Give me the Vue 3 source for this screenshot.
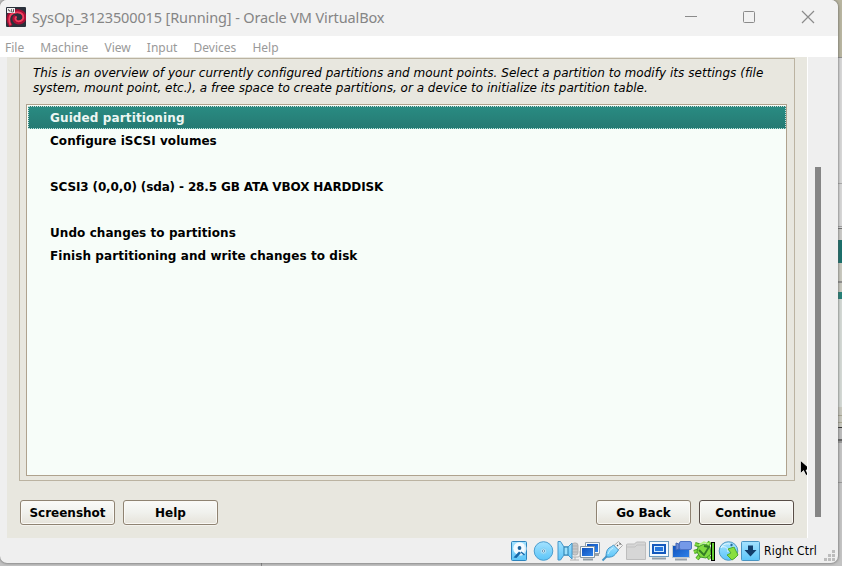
<script setup>
const menus = ['File', 'Machine', 'View', 'Input', 'Devices', 'Help']
const rows = [
  { text: 'Guided partitioning', kind: 'selected' },
  { text: 'Configure iSCSI volumes', kind: 'config' },
  { text: '', kind: 'blank' },
  { text: 'SCSI3 (0,0,0) (sda) - 28.5 GB ATA VBOX HARDDISK', kind: 'device' },
  { text: '', kind: 'blank' },
  { text: 'Undo changes to partitions', kind: 'action' },
  { text: 'Finish partitioning and write changes to disk', kind: 'action' },
]
</script>

<template>
  <div class="desktop">
    <svg class="behind" width="842" height="566" shape-rendering="crispEdges">
      <rect width="842" height="566" fill="#c3c3c3" />
      <rect x="826" width="16" height="57" fill="#b8b5a0" />
      <rect x="838" y="57" width="4" height="1" fill="#8f8f8f" />
      <rect x="838" y="58" width="4" height="170" fill="#d6d6d6" />
      <rect x="838" y="183" width="4" height="1" fill="#a9a9a9" />
      <rect x="838" y="226" width="4" height="1" fill="#a0a0a0" />
      <rect x="838" y="228" width="4" height="1" fill="#707070" />
      <rect x="838" y="229" width="4" height="11" fill="#c9c9c6" />
      <rect x="838" y="240" width="4" height="23" fill="#1b6f6b" />
      <rect x="838" y="263" width="4" height="18" fill="#c8c8be" />
      <rect x="838" y="281" width="4" height="2" fill="#8f8f8d" />
      <rect x="838" y="283" width="4" height="9" fill="#c8c8be" />
      <rect x="838" y="292" width="4" height="7" fill="#268078" />
      <rect x="838" y="299" width="4" height="108" fill="#d3d8d4" />
      <rect x="838" y="407" width="4" height="20" fill="#c8c8be" />
      <rect x="838" y="415" width="4" height="1" fill="#a7a592" />
      <rect x="838" y="422" width="4" height="1" fill="#a7a592" />
      <rect x="838" y="427" width="4" height="1" fill="#333" />
      <rect x="838" y="428" width="4" height="11" fill="#bcbcbc" />
      <rect x="838" y="439" width="4" height="2" fill="#666" />
      <rect x="838" y="441" width="4" height="2" fill="#999" />
      <rect x="838" y="482" width="4" height="1" fill="#999" />
      <rect x="261" y="563" width="1" height="3" fill="#888" />
    </svg>
    <div class="window">
      <header class="title">
        <svg class="logo" width="20" height="20" viewBox="0 0 20 20">
          <rect width="20" height="20" rx="1" fill="#2b313b" />
          <path d="M5 19C2 15 1.500 10 4 7c3.500-4 12-4 14 1 1.500 4-1 7.500-5 7.500-4.500 0-6-4-3.500-6.500" fill="none" stroke="#a80f35" stroke-width="3.800" />
          <path d="M4.500 18C2.500 14 3 9.500 5 7.500c3.500-3 10.500-3 12 .8 1.200 3.500-1 6-4.500 6-3 0-4-3-2-5" fill="none" stroke="#f2405f" stroke-width="1.800" />
          <rect x="1" y="1" width="8" height="5" fill="#f2f2f2" />
          <path d="M2.500 2v1.500h1.500V5M5.500 2v3h2V3M7.500 2v3" fill="none" stroke="#555" stroke-width=".8" />
        </svg>
        <h1>SysOp_3123500015 [Running] - Oracle VM VirtualBox</h1>
        <svg class="controls" width="136" height="16" viewBox="0 0 136 16" fill="none" stroke="#8b8b8b">
          <path d="M2 7.500h12" />
          <rect x="60.500" y="2.500" width="11" height="11" rx="1" />
          <path d="m119 2 12 12m0-12-12 12" stroke-width="1.200" />
        </svg>
      </header>
      <nav><span v-for="m in menus" :key="m">{{ m }}</span></nav>
      <div class="body">
        <main>
          <section class="panel">
            <p>This is an overview of your currently configured partitions and mount points. Select a partition to modify its settings (file<br><span>system, mount point, etc.), a free space to create partitions, or a device to initialize its partition table.</span></p>
            <ul>
              <li v-for="(r, i) in rows" :key="i" :class="r.kind">{{ r.text }}</li>
            </ul>
          </section>
          <div class="buttons">
            <button>Screenshot</button>
            <button>Help</button>
            <i></i>
            <button>Go Back</button>
            <button class="primary">Continue</button>
          </div>
        </main>
        <div class="scroll"></div>
      </div>
      <footer>
        <svg width="252" height="22" viewBox="0 0 252 22">
          <defs>
            <linearGradient id="sky" x2="0" y2="1"><stop stop-color="#a4e2ff" /><stop offset="1" stop-color="#5cc5f8" /></linearGradient>
            <linearGradient id="blue" x2="1" y2="1"><stop stop-color="#0f50ba" /><stop offset="1" stop-color="#2e83ea" /></linearGradient>
          </defs>
          <!-- hard disk -->
          <rect x="1.500" y="1.500" width="15" height="19" rx="1" fill="url(#sky)" stroke="#2d84bd" />
          <circle cx="9.500" cy="8.500" r="6.300" fill="#f4fbff" />
          <path d="M9.500 15a6.300 6.300 0 0 0 5-10" fill="none" stroke="#d2eefd" stroke-width="1.500" />
          <circle cx="9.500" cy="8" r="1.900" fill="#1d639c" />
          <path d="M3.500 17.500 9 11.500l2 1.500-4.500 5Z" fill="#1768a8" /><path d="m11 12 3.500 3" stroke="#1768a8" stroke-width="1.500" />
          <!-- optical disc -->
          <circle cx="33.500" cy="11" r="9.300" fill="url(#sky)" stroke="#4b9ed0" />
          <circle cx="33.500" cy="11" r="3" fill="#b8e8fd" stroke="#83d0f4" /><circle cx="33.500" cy="11" r="1.200" fill="#fff" stroke="#38749f" stroke-width=".7" />
          <!-- audio -->
          <g fill="#c8c8c8" stroke="#b1b1b1"><rect x="62" y="3" width="6" height="12" rx="2.500" /><path d="M59 12v3q0 2 3 2h6q2 0 2-2v-4M65 17v3M60 20h9M62 6h6M62 9h6M62 12h6" fill="none" /></g>
          <path d="M48 1.500h2.500L54 7h4l4-4v16l-4-4h-4l-3.500 5H48Z" fill="url(#sky)" stroke="#4595c8" /><path d="M54 7v8h4V7Z" fill="#9de0fb" stroke="#287cad" />
          <!-- network -->
          <g><path d="M75.500 2.500h14v11h-14Z" fill="#f4f9fc" stroke="#92a0ab" /><rect x="77" y="4" width="11" height="8" fill="url(#blue)" /><path d="M79 15h10" stroke="#99a3aa" stroke-width="2" /><path d="M70.500 6.500h14v11h-14Z" fill="#f4f9fc" stroke="#8797a2" /><rect x="72" y="8" width="11" height="8" fill="url(#blue)" /><path d="M73 19.500h10" stroke="#929ca3" stroke-width="2" /></g>
          <!-- usb -->
          <path d="m103.500 6 5-4.500 4 4-5 5Z" fill="#f3f3f3" stroke="#aaa" /><path d="m107 5 1 1m1.500-2.500 1 1" stroke="#555" stroke-width="1.300" />
          <path d="M96 17q0-7 3-9 3-1.500 4.500-3l5 5-3 4q-3 4-9.500 3Z" fill="url(#sky)" stroke="#4595c6" /><path d="m97 16-4.500 4.500" stroke="#4595c6" stroke-width="2" /><path d="M98 14q1-4 5-6" fill="none" stroke="#c8f1ff" />
          <!-- shared folder -->
          <path d="M116.500 19.500V5q0-1 1-1h7l2-2h8q1 0 1 1v16.500Z" fill="#d6d6d6" stroke="#bdbdbd" /><path d="M117 7h8l2-2h8" fill="none" stroke="#c2c2c2" />
          <!-- display -->
          <rect x="139.500" y="1.500" width="19" height="15" fill="#f3f9fd" stroke="#6c9abd" /><rect x="142" y="4" width="14" height="10" fill="#1459bd" /><rect x="144.500" y="6.500" width="9" height="5" fill="#2475dc" stroke="#d1eaff" /><path d="M142 18.500h14" stroke="#929fa8" stroke-width="2" />
          <!-- recording -->
          <rect x="162.500" y="5.500" width="17" height="12" fill="url(#blue)" stroke="#c0cbd2" /><path d="M165 19.500h12" stroke="#98a1a7" stroke-width="2" /><path d="m166 3 3 1v5l-3 1Z" fill="#6c8bd4" stroke="#4267b5" /><rect x="169.500" y="1.500" width="12" height="8" rx="1.500" fill="#7599e8" stroke="#4e73c5" />
          <!-- guest additions chip -->
          <g fill="none" stroke="#4a9f29" stroke-width="4"><path d="m185 4 6 2m9-4-3 4m-13 6 6-2m-3 9 4-5m9 5-3-5" /></g>
          <g fill="none" stroke="#82dc42" stroke-width="2.200"><path d="m185 4 6 2m9-4-3 4m-13 6 6-2m-3 9 4-5m9 5-3-5" /></g>
          <path d="m188 7 6-3 6 3 1 7-5 4-6-1-3-5Z" fill="#80da40" stroke="#419929" /><path d="m189 10 5 5 5-8-5-1" fill="none" stroke="#337c24" stroke-width="1.800" /><path d="m189 5 5-3 5 2" fill="none" stroke="#b2f47d" stroke-width="1.500" />
          <rect x="201.500" y="2.500" width="3" height="18" fill="#67cf35" stroke="#000" />
          <!-- mouse integration -->
          <circle cx="218.500" cy="11" r="9.300" fill="url(#sky)" stroke="#5299c2" /><path d="M211 8c2-5 9-6 13-1M211 7c5-1 7 1 7 5" stroke="#e6f8ff" fill="none" /><path d="m218 9 6-2 4 8-3 3-3 2-5-5 4-2Z" fill="#89df3f" stroke="#4fac30" /><circle cx="221.500" cy="5" r="1.200" fill="#276a94" />
          <!-- keyboard capture -->
          <rect x="231.500" y="1.500" width="18" height="19" rx="1" fill="url(#sky)" stroke="#4994c2" /><path d="M238 5.500h5v4.500h3.500l-6 6.500-6-6.500h3.500Z" fill="#123e6b" />
        </svg>
        <span>Right Ctrl</span>
        <svg class="grip" width="11" height="12" viewBox="0 0 11 12" fill="#bcbcbc"><path d="M8 0h3v3H8ZM4 4h3v3H4ZM8 4h3v3H8ZM0 8h3v3H0ZM4 8h3v3H4ZM8 8h3v3H8Z" /></svg>
      </footer>
    </div>
    <svg class="cursor" width="7" height="17" viewBox="0 0 7 17"><path d="M.5.5v13l3-3 2.500 5 2-1-2-4.500h2V7Z" fill="#000" stroke="#fff" stroke-width=".7" /></svg>
  </div>
</template>

<style>
body { overflow: hidden; }
</style>
<style scoped>
* { box-sizing: border-box; }
.desktop { position: relative; width: 842px; height: 566px; overflow: hidden; }
.behind { position: absolute; left: 0; top: 0; }
.window { position: relative; width: 838px; height: 563px; background: #efefef; border-radius: 7px; overflow: hidden; display: flex; flex-direction: column; box-shadow: 0 0 3px #555; }
.title { height: 36px; flex: none; background: #f2f2f2; display: flex; align-items: center; padding: 0 19px 0 6px; }
.logo { margin-top: -2px; }
h1 { margin: -2px 0 0 6px; font: 14.500px/20px "Noto Sans", sans-serif; color: #858585; white-space: nowrap; letter-spacing: -.125px; }
.controls { margin-left: auto; margin-top: -3px; }
nav { height: 21px; flex: none; background: #fff; padding: 0 5px; display: flex; gap: 16.100px; font: 12px/23px "Noto Sans", sans-serif; color: #999; }
.body { height: 481px; display: flex; flex: none; }
main { width: 801px; margin-left: 7px; padding: 1px 13px 0 12px; background: #e8e7df; border-right: 1px solid #fff; display: flex; flex-direction: column; }
.panel { width: 776px; height: 423px; border: 1px solid #bbb3a1; padding: 7px 7px 4px 6px; }
p { margin: 0 0 8px 7px; height: 30px; font: italic 12px/15px "DejaVu Sans", sans-serif; color: #000; white-space: nowrap; letter-spacing: .034px; }
p span { letter-spacing: 0; }
ul { height: 372px; width: 761px; margin: 0; padding: 1px 0 0 1px; border: 1px solid #afa28e; background: #f7fdf9; list-style: none; }
li { height: 23px; width: 758px; padding: 1px 0 0 22px; font: bold 12px/23px "DejaVu Sans", sans-serif; white-space: nowrap; }
.selected { color: #edf7f3; background: linear-gradient(#298b82, #267a73); border: 1px dotted #c5ded9; line-height: 21px; padding-left: 21px; letter-spacing: .12px; }
.config { letter-spacing: .04px; }
.device { letter-spacing: -.13px; }
.action { letter-spacing: .07px; }
.buttons { display: flex; gap: 8px; margin: 19px 0 0 1px; width: 774px; }
.buttons i { flex: 1; }
button { width: 95px; height: 25px; padding: 0; border: 1px solid #8f8372; border-radius: 3px; background: linear-gradient(#fafaf8, #f0f1ed 50%, #e6e3da); box-shadow: inset 0 0 0 1px #faf9f5, 0 1px #f4f3ee; font: bold 12px/22px "DejaVu Sans", sans-serif; color: #000; }
.primary { border-color: #594e48; padding-right: 2px; }
.scroll { width: 6px; height: 350px; margin: 110px 0 0 7px; background: #858585; }
footer { display: flex; height: 25px; padding: 2px 3px 0 510px; font: 12px/23px "DejaVu Sans Condensed", "DejaVu Sans", sans-serif; letter-spacing: .2px; }
footer span { margin-left: 2px; white-space: nowrap; }
.grip { margin: 10px 0 0 auto; }
.cursor { position: absolute; left: 800px; top: 460px; }
</style>
